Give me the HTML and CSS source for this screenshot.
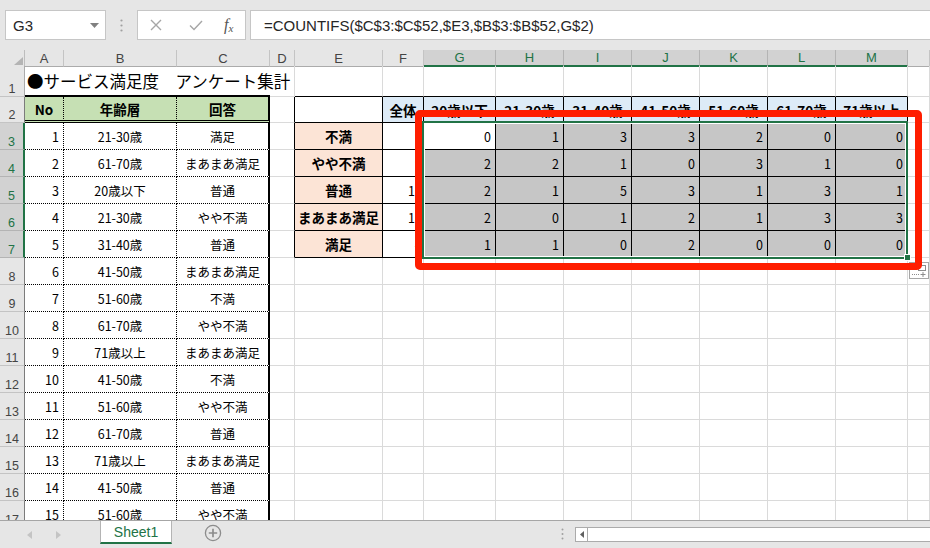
FILE: index.html
```html
<!DOCTYPE html>
<html lang="ja">
<head>
<meta charset="utf-8">
<title>Sheet1</title>
<link rel="stylesheet" href="styles.css">
</head>
<body>
<div class="app">
  <div class="toolbar">
    <div class="namebox"><span>G3</span><svg width="9" height="5" viewBox="0 0 9 5"><path d="M0 0H9L4.5 5Z" fill="#808080"/></svg></div>
    <div class="vdots"><svg width="3" height="13" viewBox="0 0 3 13"><circle cx="1.5" cy="1.5" r="1.1" fill="#a0a0a0"/><circle cx="1.5" cy="6.5" r="1.1" fill="#a0a0a0"/><circle cx="1.5" cy="11.5" r="1.1" fill="#a0a0a0"/></svg></div>
    <div class="fxbox">
      <svg class="ic-x" width="12" height="12" viewBox="0 0 12 12"><path d="M1 1L11 11M11 1L1 11" stroke="#a6a6a6" stroke-width="1.4" fill="none"/></svg>
      <svg class="ic-ok" width="14" height="11" viewBox="0 0 14 11"><path d="M1 5.5L5 9.5L13 1" stroke="#a6a6a6" stroke-width="1.4" fill="none"/></svg>
      <span class="fx"><i>f</i><sub>x</sub></span>
    </div>
    <div class="formula">=COUNTIFS($C$3:$C$52,$E3,$B$3:$B$52,G$2)</div>
  </div>

  <div class="sheet">
    <div class="row hdr">
      <div class="corner"><svg width="9" height="8" viewBox="0 0 9 8"><path d="M9 0V8H0Z" fill="#b4b4b4"/></svg></div>
      <div class="ch">A</div>
      <div class="ch">B</div>
      <div class="ch">C</div>
      <div class="ch">D</div>
      <div class="ch">E</div>
      <div class="ch">F</div>
      <div class="ch sel">G</div>
      <div class="ch sel">H</div>
      <div class="ch sel">I</div>
      <div class="ch sel">J</div>
      <div class="ch sel">K</div>
      <div class="ch sel">L</div>
      <div class="ch sel">M</div>
      <div class="ch"></div>
    </div>

    <div class="row r1">
      <div class="rh">1</div>
      <div class="tt title">●サービス満足度　アンケート集計</div>
      <div class="tt"></div>
      <div class="tt"></div>
      <div></div>
      <div class="tb"></div>
      <div class="tb"></div>
      <div class="tb"></div>
      <div class="tb"></div>
      <div class="tb"></div>
      <div class="tb"></div>
      <div class="tb"></div>
      <div class="tb"></div>
      <div class="tb"></div>
      <div></div>
    </div>

    <div class="row r2">
      <div class="rh dk">2</div>
      <div class="th">No</div>
      <div class="th">年齢層</div>
      <div class="th cr">回答</div>
      <div class="bl"></div>
      <div class="g"></div>
      <div class="g blue">全体</div>
      <div class="g blue">20歳以下</div>
      <div class="g blue">21-30歳</div>
      <div class="g blue">31-40歳</div>
      <div class="g blue">41-50歳</div>
      <div class="g blue">51-60歳</div>
      <div class="g blue">61-70歳</div>
      <div class="g blue">71歳以上</div>
      <div></div>
    </div>

    <div class="row">
      <div class="rh sel">3</div>
      <div class="td num">1</div>
      <div class="td">21-30歳</div>
      <div class="td cr">満足</div>
      <div class="bl"></div>
      <div class="g peach">不満</div>
      <div class="g num fv">9</div>
      <div class="g num">0</div>
      <div class="g num gr">1</div>
      <div class="g num gr">3</div>
      <div class="g num gr">3</div>
      <div class="g num gr">2</div>
      <div class="g num gr">0</div>
      <div class="g num gr">0</div>
      <div></div>
    </div>

    <div class="row">
      <div class="rh sel">4</div>
      <div class="td num">2</div>
      <div class="td">61-70歳</div>
      <div class="td cr">まあまあ満足</div>
      <div class="bl"></div>
      <div class="g peach">やや不満</div>
      <div class="g num fv">9</div>
      <div class="g num gr">2</div>
      <div class="g num gr">2</div>
      <div class="g num gr">1</div>
      <div class="g num gr">0</div>
      <div class="g num gr">3</div>
      <div class="g num gr">1</div>
      <div class="g num gr">0</div>
      <div></div>
    </div>

    <div class="row">
      <div class="rh sel">5</div>
      <div class="td num">3</div>
      <div class="td">20歳以下</div>
      <div class="td cr">普通</div>
      <div class="bl"></div>
      <div class="g peach">普通</div>
      <div class="g num fv">16</div>
      <div class="g num gr">2</div>
      <div class="g num gr">1</div>
      <div class="g num gr">5</div>
      <div class="g num gr">3</div>
      <div class="g num gr">1</div>
      <div class="g num gr">3</div>
      <div class="g num gr">1</div>
      <div></div>
    </div>

    <div class="row">
      <div class="rh sel">6</div>
      <div class="td num">4</div>
      <div class="td">21-30歳</div>
      <div class="td cr">やや不満</div>
      <div class="bl"></div>
      <div class="g peach">まあまあ満足</div>
      <div class="g num fv">12</div>
      <div class="g num gr">2</div>
      <div class="g num gr">0</div>
      <div class="g num gr">1</div>
      <div class="g num gr">2</div>
      <div class="g num gr">1</div>
      <div class="g num gr">3</div>
      <div class="g num gr">3</div>
      <div></div>
    </div>

    <div class="row">
      <div class="rh sel">7</div>
      <div class="td num">5</div>
      <div class="td">31-40歳</div>
      <div class="td cr">普通</div>
      <div class="bl"></div>
      <div class="g peach">満足</div>
      <div class="g num fv">4</div>
      <div class="g num gr">1</div>
      <div class="g num gr">1</div>
      <div class="g num gr">0</div>
      <div class="g num gr">2</div>
      <div class="g num gr">0</div>
      <div class="g num gr">0</div>
      <div class="g num gr">0</div>
      <div></div>
    </div>

    <div class="row">
      <div class="rh dk">8</div>
      <div class="td num">6</div>
      <div class="td">41-50歳</div>
      <div class="td cr">まあまあ満足</div>
      <div></div><div></div><div></div><div></div><div></div><div></div><div></div><div></div><div></div><div></div><div></div>
    </div>

    <div class="row">
      <div class="rh dk">9</div>
      <div class="td num">7</div>
      <div class="td">51-60歳</div>
      <div class="td cr">不満</div>
      <div></div><div></div><div></div><div></div><div></div><div></div><div></div><div></div><div></div><div></div><div></div>
    </div>

    <div class="row">
      <div class="rh dk">10</div>
      <div class="td num">8</div>
      <div class="td">61-70歳</div>
      <div class="td cr">やや不満</div>
      <div></div><div></div><div></div><div></div><div></div><div></div><div></div><div></div><div></div><div></div><div></div>
    </div>

    <div class="row">
      <div class="rh dk">11</div>
      <div class="td num">9</div>
      <div class="td">71歳以上</div>
      <div class="td cr">まあまあ満足</div>
      <div></div><div></div><div></div><div></div><div></div><div></div><div></div><div></div><div></div><div></div><div></div>
    </div>

    <div class="row">
      <div class="rh dk">12</div>
      <div class="td num">10</div>
      <div class="td">41-50歳</div>
      <div class="td cr">不満</div>
      <div></div><div></div><div></div><div></div><div></div><div></div><div></div><div></div><div></div><div></div><div></div>
    </div>

    <div class="row">
      <div class="rh dk">13</div>
      <div class="td num">11</div>
      <div class="td">51-60歳</div>
      <div class="td cr">やや不満</div>
      <div></div><div></div><div></div><div></div><div></div><div></div><div></div><div></div><div></div><div></div><div></div>
    </div>

    <div class="row">
      <div class="rh dk">14</div>
      <div class="td num">12</div>
      <div class="td">61-70歳</div>
      <div class="td cr">普通</div>
      <div></div><div></div><div></div><div></div><div></div><div></div><div></div><div></div><div></div><div></div><div></div>
    </div>

    <div class="row">
      <div class="rh dk">15</div>
      <div class="td num">13</div>
      <div class="td">71歳以上</div>
      <div class="td cr">まあまあ満足</div>
      <div></div><div></div><div></div><div></div><div></div><div></div><div></div><div></div><div></div><div></div><div></div>
    </div>

    <div class="row">
      <div class="rh dk">16</div>
      <div class="td num">14</div>
      <div class="td">41-50歳</div>
      <div class="td cr">普通</div>
      <div></div><div></div><div></div><div></div><div></div><div></div><div></div><div></div><div></div><div></div><div></div>
    </div>

    <div class="row">
      <div class="rh dk">17</div>
      <div class="td num">15</div>
      <div class="td">51-60歳</div>
      <div class="td cr">やや不満</div>
      <div></div><div></div><div></div><div></div><div></div><div></div><div></div><div></div><div></div><div></div><div></div>
    </div>

    <div class="selbox"></div>
    <div class="handle"></div>
    <div class="qa"><svg width="20" height="17" viewBox="0 0 20 17"><rect x="0.5" y="0.5" width="19" height="16" fill="#fff" stroke="#a6a6a6"/><rect x="9.5" y="3.5" width="7" height="5" fill="none" stroke="#8c8c8c"/><path d="M3 12.5H10" stroke="#8c8c8c" stroke-dasharray="1 1"/><path d="M14 10V15M11.5 12.5H16.5" stroke="#8c8c8c"/></svg></div>
    <div class="redbox"></div>
  </div>

  <div class="tabs">
    <div class="nav">
      <svg width="5" height="8" viewBox="0 0 5 8"><path d="M5 0V8L0 4Z" fill="#c4c4c4"/></svg>
      <svg width="5" height="8" viewBox="0 0 5 8"><path d="M0 0V8L5 4Z" fill="#c4c4c4"/></svg>
    </div>
    <div class="tab">Sheet1</div>
    <div class="add"><svg width="18" height="18" viewBox="0 0 18 18"><circle cx="9" cy="9" r="7.6" stroke="#8c8c8c" stroke-width="1.3" fill="none"/><path d="M9 4.8V13.2M4.8 9H13.2" stroke="#8c8c8c" stroke-width="1.7"/></svg></div>
    <div class="spacer"></div>
    <div class="hdots"><svg width="3" height="12" viewBox="0 0 3 12"><circle cx="1.5" cy="1.5" r="1" fill="#a0a0a0"/><circle cx="1.5" cy="6" r="1" fill="#a0a0a0"/><circle cx="1.5" cy="10.5" r="1" fill="#a0a0a0"/></svg></div>
    <div class="hscroll">
      <div class="sbtn"><svg width="4" height="7" viewBox="0 0 4 7"><path d="M4 0V7L0 3.5Z" fill="#606060"/></svg></div>
    </div>
  </div>
</div>
</body>
</html>
```

FILE: styles.css
```css
* {
  box-sizing: border-box;
  margin: 0;
  padding: 0;
}

html, body {
  width: 930px;
  height: 548px;
  overflow: hidden;
}

body {
  background: #e6e6e6;
  font-family: "Noto Sans CJK JP", "Noto Sans", sans-serif;
  color: #000;
}

.app {
  display: flex;
  flex-direction: column;
  height: 548px;
}

/* ---------- formula bar ---------- */
.toolbar {
  height: 50px;
  display: flex;
  align-items: flex-start;
  padding-top: 10px;
  background: #e6e6e6;
}

.namebox {
  margin-left: 5px;
  width: 101px;
  height: 30px;
  background: #fff;
  border: 1px solid #c6c6c6;
  display: flex;
  align-items: center;
  justify-content: space-between;
  padding: 0 6px 0 7px;
  font: 15px "Liberation Sans", Arial, sans-serif;
  color: #262626;
}

.vdots {
  width: 31px;
  height: 30px;
  display: flex;
  align-items: center;
  justify-content: center;
}

.fxbox {
  width: 109px;
  height: 30px;
  background: #fff;
  border: 1px solid #c6c6c6;
  display: flex;
  align-items: center;
  padding-left: 12px;
}

.ic-ok {
  margin-left: 27px;
}

.fx {
  margin-left: 21px;
  font-family: "Liberation Serif", serif;
  font-size: 16px;
  color: #555;
  line-height: 1;
}

.fx i {
  font-style: italic;
}

.fx sub {
  font-size: 11px;
  font-style: italic;
  vertical-align: -2px;
}

.formula {
  margin-left: 4px;
  flex: 1;
  height: 30px;
  background: #fff;
  border: 1px solid #c6c6c6;
  border-right: none;
  padding-left: 13px;
  display: flex;
  align-items: center;
  font: 15px "Liberation Sans", Arial, sans-serif;
  color: #262626;
}

/* ---------- sheet grid ---------- */
.sheet {
  position: relative;
  height: 470px;
  overflow: hidden;
  background: #fff;
}

.row {
  display: grid;
  grid-template-columns: 25px 39px 113px 93px 25px 88px 41px 72px 68px 68px 68px 68px 68px 72px 1fr;
  height: 27px;
}

.row.hdr { height: 16px; }
.row.r1 { height: 31px; }
.row.r2 { height: 26px; }

.row > * {
  border-right: 1px solid #dadada;
  border-bottom: 1px solid #dadada;
  display: flex;
  align-items: center;
  justify-content: center;
  font-size: 12.5px;
  white-space: nowrap;
  min-width: 0;
}

/* headers */
.corner {
  background: #e6e6e6;
  border-right: 1px solid #bdbdbd;
  border-bottom: 1px solid #ababab;
  align-items: flex-end;
  justify-content: flex-end;
  padding: 0 1px 1px 0;
}

.ch {
  background: #e6e6e6;
  border-right: 1px solid #c4c4c4;
  border-bottom: 1px solid #ababab;
  font: 13px "Liberation Sans", Arial, sans-serif;
  color: #444;
}

.ch.sel {
  background: #d2d2d2;
  color: #217346;
  border-bottom: 2px solid #217346;
  border-right-color: #b4b4b4;
}

.rh {
  background: #e6e6e6;
  border-right: 1px solid #ababab;
  border-bottom: 1px solid #c4c4c4;
  align-items: flex-end;
  font: 12.5px/14px "Liberation Sans", Arial, sans-serif;
  color: #444;
}

.rh.dk {
  border-right-color: #7c7c7c;
}

.rh.sel {
  background: #d2d2d2;
  color: #217346;
  border-right: 2px solid #217346;
  border-bottom-color: #b4b4b4;
}

/* left table */
.tt {
  border-right: none;
  border-bottom: 2px solid #000;
}

.title {
  justify-content: flex-start;
  padding-left: 2px;
  font-size: 16.5px;
  overflow: visible;
}

.th {
  background: #c6e0b4;
  font-weight: 700;
  font-size: 13.5px;
  border-right: 1px dotted #000;
  border-bottom: 3px double #000;
}

.td {
  border-right: 1px dotted #000;
  border-bottom: 1px dotted #000;
}

.cr {
  border-right: 2px solid #000;
}

.num {
  justify-content: flex-end;
  padding-right: 4px;
}

/* right table */
.tb {
  border-bottom: 1px solid #000;
}

.bl {
  border-right: 1px solid #000;
}

.g {
  border-right: 1px solid #000;
  border-bottom: 1px solid #000;
}

.blue {
  background: #ddebf7;
  font-weight: 700;
  font-size: 13.5px;
}

.peach {
  background: #fce4d6;
  font-weight: 700;
  font-size: 13.5px;
}

.fv {
  padding-right: 1px;
}

.gr {
  background: #c6c6c6;
}

/* overlays */
.selbox {
  position: absolute;
  left: 422px;
  top: 71px;
  width: 486px;
  height: 138px;
  border: 2px solid #217346;
  box-shadow: inset 0 0 0 1px #fff;
}

.handle {
  position: absolute;
  left: 904px;
  top: 204px;
  width: 7px;
  height: 7px;
  background: #217346;
  border: 1px solid #fff;
}

.qa {
  position: absolute;
  left: 909px;
  top: 212px;
  width: 20px;
  height: 17px;
  line-height: 0;
}

.redbox {
  position: absolute;
  left: 415px;
  top: 60px;
  width: 507px;
  height: 160px;
  border: 7px solid #ff1e00;
  border-radius: 5px;
}

/* ---------- sheet tabs ---------- */
.tabs {
  height: 28px;
  border-top: 1px solid #a6a6a6;
  background: #e6e6e6;
  display: flex;
  align-items: flex-start;
}

.nav {
  width: 100px;
  height: 27px;
  display: flex;
  align-items: center;
  padding-left: 27px;
  gap: 24px;
}

.tab {
  width: 72px;
  height: 23px;
  background: #fff;
  border-left: 1px solid #b4b4b4;
  border-right: 1px solid #b4b4b4;
  border-bottom: 2px solid #217346;
  display: flex;
  align-items: center;
  justify-content: center;
  font: 14px "Liberation Sans", Arial, sans-serif;
  color: #217346;
}

.add {
  margin-left: 32px;
  margin-top: 3px;
  line-height: 0;
}

.spacer {
  flex: 1;
}

.hdots {
  margin-top: 7px;
  margin-right: 11px;
  line-height: 0;
}

.hscroll {
  margin-top: 6px;
  width: 355px;
  height: 15px;
  background: #fff;
  border: 1px solid #ababab;
  border-right: none;
  display: flex;
}

.sbtn {
  width: 12px;
  height: 13px;
  border-right: 1px solid #ababab;
  display: flex;
  align-items: center;
  justify-content: center;
}
```
